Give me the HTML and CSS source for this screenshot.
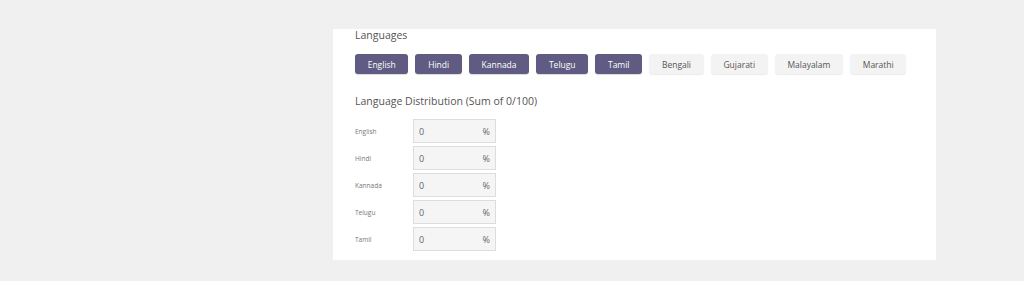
FILE: index.html
```html
<!DOCTYPE html>
<html lang="en">
<head>
    <meta charset="UTF-8">
    <title>Languages</title>
    <link rel="stylesheet" href="styles.css">
</head>
<body>
    <div class="panel">
        <div class="section-title">Languages</div>
        <div class="lang-list">
            <button class="lang selected">English</button>
            <button class="lang selected">Hindi</button>
            <button class="lang selected">Kannada</button>
            <button class="lang selected">Telugu</button>
            <button class="lang selected">Tamil</button>
            <button class="lang">Bengali</button>
            <button class="lang">Gujarati</button>
            <button class="lang">Malayalam</button>
            <button class="lang">Marathi</button>
        </div>

        <div class="section-title dist-title">Language Distribution (Sum of 0/100)</div>
        <div class="dist">
            <div class="dist-row">
                <label>English</label>
                <div class="pct"><span>0</span><span>%</span></div>
            </div>
            <div class="dist-row">
                <label>Hindi</label>
                <div class="pct"><span>0</span><span>%</span></div>
            </div>
            <div class="dist-row">
                <label>Kannada</label>
                <div class="pct"><span>0</span><span>%</span></div>
            </div>
            <div class="dist-row">
                <label>Telugu</label>
                <div class="pct"><span>0</span><span>%</span></div>
            </div>
            <div class="dist-row">
                <label>Tamil</label>
                <div class="pct"><span>0</span><span>%</span></div>
            </div>
        </div>
    </div>
</body>
</html>
```

FILE: styles.css
```css
body {
    margin: 0;
    background: #f0f0f0;
    font-family: "Open Sans", Arial, sans-serif;
    color: #555;
}
.panel {
    margin: 29px 0 0 333px;
    width: 581px;
    height: 231px;
    padding: 0 0 0 22px;
    background: #fff;
}
.section-title {
    font-size: 10.5px;
    line-height: 13px;
    color: #555;
}
.lang-list {
    display: flex;
    gap: 7px;
    margin-top: 12px;
}
.lang {
    height: 20px;
    padding: 0 12.7px;
    border: none;
    border-radius: 3px;
    font-family: "Open Sans", Arial, sans-serif;
    font-size: 8.5px;
    background: #f3f3f3;
    color: #555;
    box-shadow: 0 1px 1px rgba(0, 0, 0, 0.08);
    cursor: pointer;
}
.lang.selected {
    background: #5f5b82;
    color: #fff;
    box-shadow: 0 1px 1px rgba(0, 0, 0, 0.15);
}
.dist-title {
    margin-top: 21px;
}
.dist {
    margin-top: 11px;
    display: flex;
    flex-direction: column;
    gap: 3px;
}
.dist-row {
    display: flex;
    align-items: center;
}
.dist-row label {
    width: 58px;
    font-size: 6.5px;
    color: #777;
}
.pct {
    width: 71px;
    height: 22px;
    padding: 0 5px;
    display: flex;
    align-items: center;
    justify-content: space-between;
    background: #f5f5f5;
    border: 1px solid #ddd;
    font-size: 9px;
    color: #666;
}
```
